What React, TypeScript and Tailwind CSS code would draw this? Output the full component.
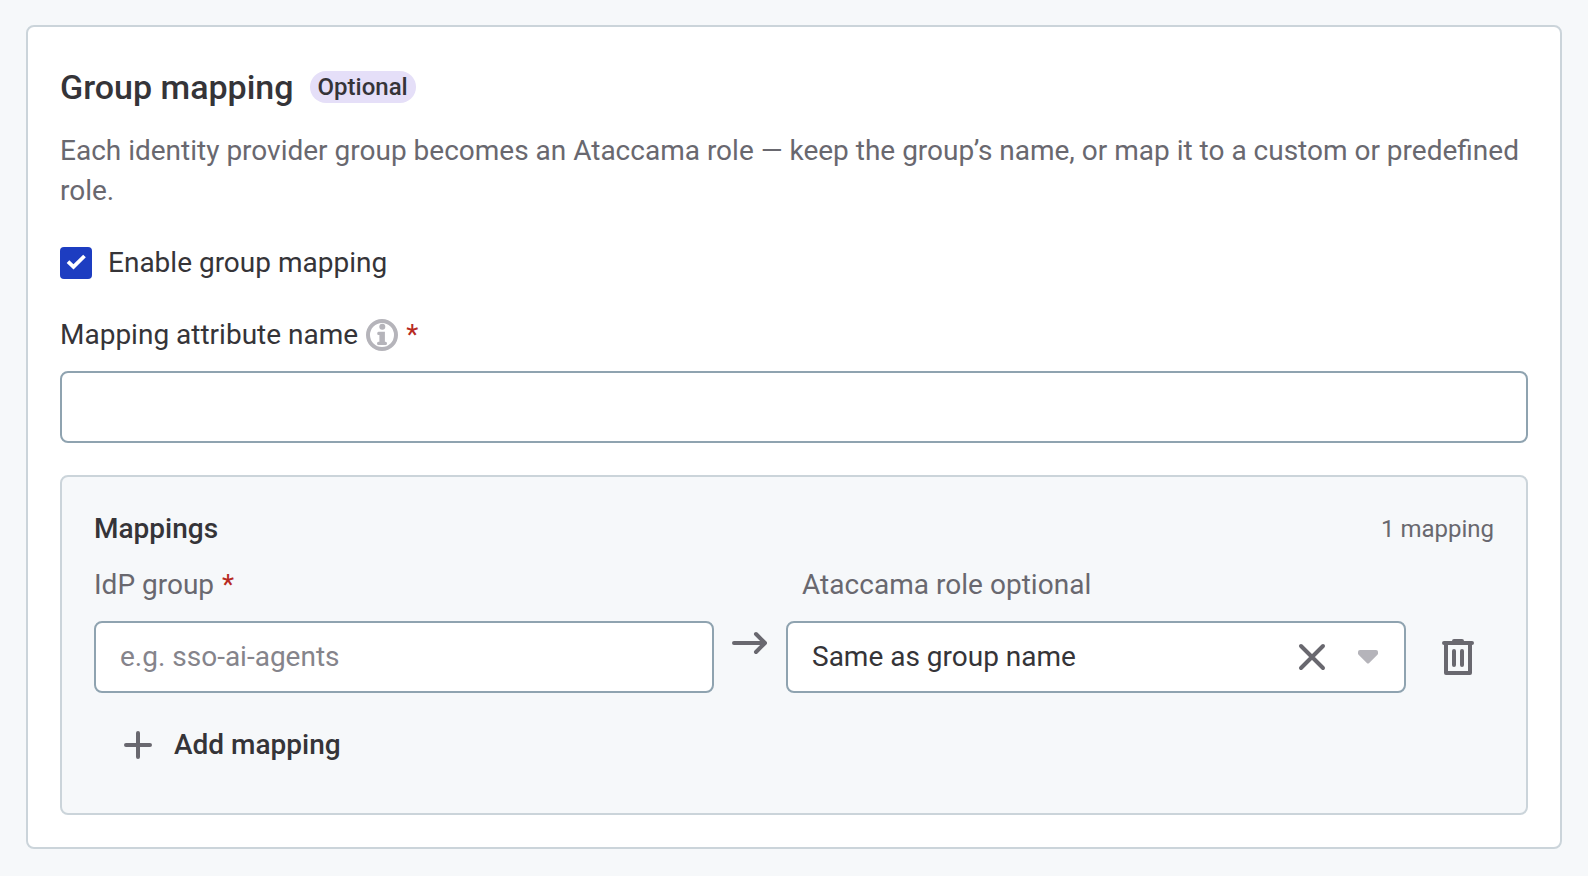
import React, { useState } from "react";

const content = {
  title: "Group mapping",
  badge: "Optional",
  description:
    "Each identity provider group becomes an Ataccama role — keep the group’s name, or map it to a custom or predefined role.",
  enable: "Enable group mapping",
  attribute: "Mapping attribute name",
  mappings: "Mappings",
  idpGroup: "IdP group",
  role: "Ataccama role optional",
  placeholder: "e.g. sso-ai-agents",
  sameAsGroup: "Same as group name",
  add: "Add mapping",
};

function InfoIcon() {
  return (
    <svg viewBox="0 0 32 32" className="size-8 flex-none" aria-hidden="true">
      <circle cx="16" cy="16" r="14" fill="none" stroke="#b5b4ba" strokeWidth="4" />
      <circle cx="16.3" cy="7.8" r="3" fill="#b5b4ba" />
      <path
        d="M12.5 12.7H18.9V22.8H19.5Q21 22.8 21 24.4T19.5 26H12.5Q11 26 11 24.4T12.5 22.8H13.4V16H12.5Q11.2 16 11.2 14.4T12.5 12.7Z"
        fill="#b5b4ba"
      />
    </svg>
  );
}

function ArrowIcon() {
  return (
    <svg
      viewBox="0 0 36 24"
      className="h-6 w-9"
      fill="none"
      stroke="#69686f"
      strokeWidth="4"
      strokeLinecap="round"
      strokeLinejoin="round"
      aria-hidden="true"
    >
      <path d="M2 12H32M24 3L33 12L24 21" />
    </svg>
  );
}

function CloseIcon() {
  return (
    <svg
      viewBox="0 0 28 28"
      className="size-7"
      fill="none"
      stroke="#69686f"
      strokeWidth="4"
      strokeLinecap="round"
      aria-hidden="true"
    >
      <path d="M3 3L25 25M25 3L3 25" />
    </svg>
  );
}

function CaretIcon() {
  return (
    <svg viewBox="0 0 20 14" className="h-3.5 w-5" fill="#b5b4ba" aria-hidden="true">
      <path d="M2 0H18Q20 0 20 2V3.2Q20 4.2 19.2 5L11.2 12.9Q10 14 8.8 12.9L0.8 5Q0 4.2 0 3.2V2Q0 0 2 0Z" />
    </svg>
  );
}

function TrashIcon() {
  return (
    <svg
      viewBox="0 0 32 36"
      className="h-9 w-8"
      fill="none"
      stroke="#69686f"
      strokeWidth="4"
      strokeLinecap="round"
      strokeLinejoin="round"
      aria-hidden="true"
    >
      <path d="M2 4H30M12 2H20M4 4V34H28V4M12 12V26M20 12V26" />
    </svg>
  );
}

function PlusIcon() {
  return (
    <svg
      viewBox="0 0 28 28"
      className="size-7"
      fill="none"
      stroke="#69686f"
      strokeWidth="4"
      strokeLinecap="round"
      aria-hidden="true"
    >
      <path d="M14 2V26M2 14H26" />
    </svg>
  );
}

export default function App() {
  const [enabled, setEnabled] = useState(true);
  const [attribute, setAttribute] = useState("");
  const [group, setGroup] = useState("");

  return (
    <div className="h-[876px] bg-[#f6f8fa] pt-[25px] pr-[26px] pl-[26px] font-[Roboto,sans-serif] text-[28px] leading-10 text-[#353438]">
      <section className="rounded-lg border-2 border-[#cbd4da] bg-white px-8 pt-10 pb-8">
        <div className="flex items-center gap-4">
          <h2 className="text-[34px] leading-10 font-medium">{content.title}</h2>
          <span className="h-8 rounded-full bg-[#e5dff8] px-2 text-2xl/8 font-medium">
            {content.badge}
          </span>
        </div>
        <p className="mt-6 text-[#69686f]">{content.description}</p>

        <button
          role="checkbox"
          aria-checked={enabled}
          onClick={() => setEnabled(!enabled)}
          className="mt-9 flex h-8 items-center gap-4"
        >
          <span className="flex size-8 items-center justify-center rounded bg-[#1d3dc1]">
            {enabled && (
              <svg viewBox="0 0 32 32" className="size-8" fill="none" aria-hidden="true">
                <path d="M8 14.6L13.5 19.8L24.5 9" stroke="#fff" strokeWidth="3.8" />
              </svg>
            )}
          </span>
          <span>{content.enable}</span>
        </button>

        <div className="mt-9 flex items-center">
          <span className="mr-2">{content.attribute}</span>
          <InfoIcon />
          <span className="ml-2 text-[#b72a22]">*</span>
        </div>
        <input
          value={attribute}
          onChange={(e) => setAttribute(e.target.value)}
          className="mt-4 block h-18 w-full rounded-lg border-2 border-[#8fa3b0] bg-white px-6"
        />

        <div className="mt-8 rounded-lg border-2 border-[#cbd4da] bg-[#f6f8fa] p-8">
          <div className="flex items-center justify-between">
            <h3 className="font-medium">{content.mappings}</h3>
            <span className="text-2xl/10 text-[#69686f]">1 mapping</span>
          </div>
          <div className="mt-4 grid grid-cols-[708px_1fr] text-[#69686f]">
            <span className="flex gap-2">
              {content.idpGroup}
              <span className="text-[#b72a22]">*</span>
            </span>
            <span className="tracking-[0.03px]">{content.role}</span>
          </div>
          <div className="mt-4 flex h-18">
            <input
              value={group}
              onChange={(e) => setGroup(e.target.value)}
              placeholder={content.placeholder}
              className="w-[620px] rounded-lg border-2 border-[#8fa3b0] bg-white px-6 placeholder:text-[#85848b]"
            />
            <div className="flex h-11 w-18 items-center justify-center">
              <ArrowIcon />
            </div>
            <div className="flex w-[620px] items-center rounded-lg border-2 border-[#8fa3b0] bg-white pr-[26px] pl-6">
              <span className="flex-1">{content.sameAsGroup}</span>
              <button className="mr-8" aria-label="Clear">
                <CloseIcon />
              </button>
              <CaretIcon />
            </div>
            <button className="ml-9" aria-label="Delete">
              <TrashIcon />
            </button>
          </div>
          <button className="mt-4 flex h-18 items-center gap-[22px] px-[30px] font-medium">
            <PlusIcon />
            {content.add}
          </button>
        </div>
      </section>
    </div>
  );
}
